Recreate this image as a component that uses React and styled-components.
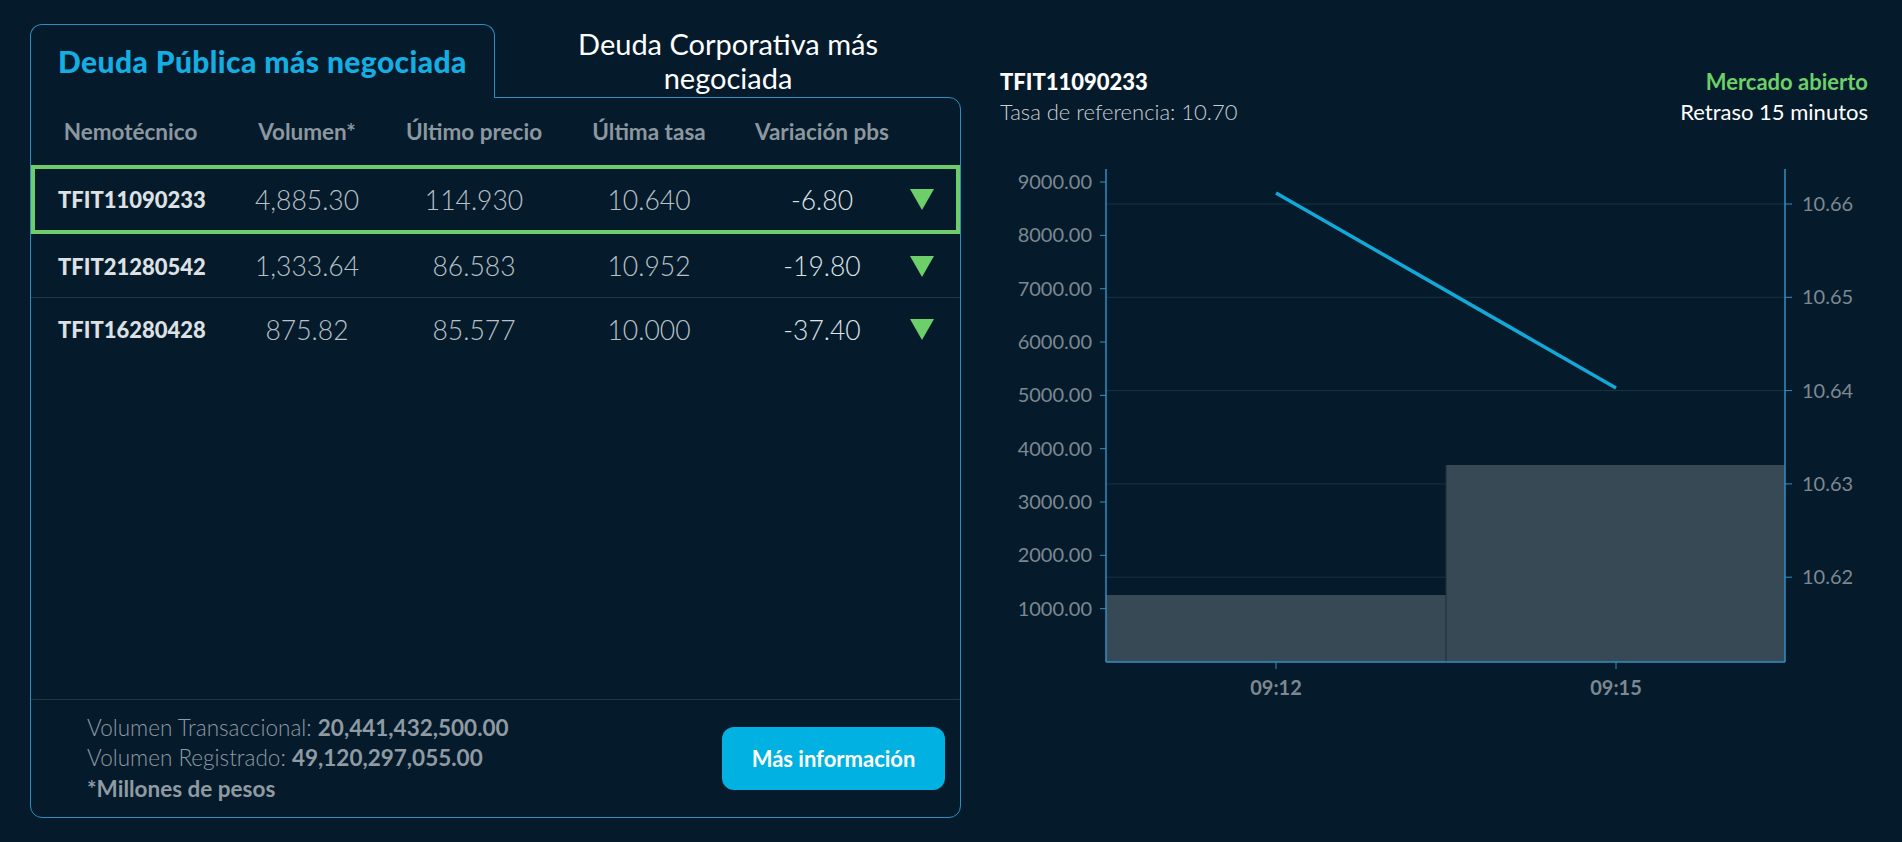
import React from 'react';
import styled, { createGlobalStyle } from 'styled-components';

const GlobalStyle = createGlobalStyle`
  body {
    margin: 0;
    background: #051b2b;
    font-family: Lato, "Open Sans", sans-serif;
  }
`

const bonds = [
  { code: 'TFIT11090233', vol: '4,885.30', price: '114.930', rate: '10.640', pbs: '-6.80', selected: true },
  { code: 'TFIT21280542', vol: '1,333.64', price: '86.583', rate: '10.952', pbs: '-19.80' },
  { code: 'TFIT16280428', vol: '875.82', price: '85.577', rate: '10.000', pbs: '-37.40' },
];

const leftTicks = [9000, 8000, 7000, 6000, 5000, 4000, 3000, 2000, 1000];
const rightTicks = [10.66, 10.65, 10.64, 10.63, 10.62];

// chart geometry (svg coords)
const X0 = 106, X1 = 785, Y0 = 512;
const volY = v => Y0 - v * 0.05333;
const rateY = r => 54 + (10.66 - r) * 9330;

const Chart = () => (
  <svg width="868" height="560" style={{ display: 'block' }}>
    {rightTicks.map(r => (
      <line key={r} x1={X0} x2={X1} y1={rateY(r)} y2={rateY(r)} stroke="#173447" strokeWidth="1" />
    ))}
    <rect x={X0} y={volY(1256)} width={340} height={Y0 - volY(1256)} fill="#364954" />
    <rect x={446} y={volY(3694)} width={339} height={Y0 - volY(3694)} fill="#364954" />
    <line x1={446} x2={446} y1={volY(3694)} y2={Y0} stroke="#1d2f3b" strokeWidth="1" />
    <line x1={276} y1={43} x2={616} y2={238} stroke="#12a8d8" strokeWidth="3.5" />

    <line x1={X0} x2={X0} y1={19} y2={Y0} stroke="#2f8fc4" strokeWidth="1.5" />
    <line x1={X1} x2={X1} y1={19} y2={Y0} stroke="#2f8fc4" strokeWidth="1.5" />
    <line x1={X0} x2={X1} y1={Y0} y2={Y0} stroke="#2f8fc4" strokeWidth="1.5" />

    {leftTicks.map(v => (
      <g key={v}>
        <line x1={100} x2={X0} y1={volY(v)} y2={volY(v)} stroke="#2f8fc4" />
        <text x={92} y={volY(v) + 7} textAnchor="end" fill="#7d8891" fontSize="20" fontFamily="Lato">{v.toFixed(2)}</text>
      </g>
    ))}
    {rightTicks.map(r => (
      <g key={r}>
        <line x1={X1} x2={X1 + 7} y1={rateY(r)} y2={rateY(r)} stroke="#2f8fc4" />
        <text x={802} y={rateY(r) + 7} fill="#7d8891" fontSize="20" fontFamily="Lato">{r.toFixed(2)}</text>
      </g>
    ))}
    {[[276, '09:12'], [616, '09:15']].map(([x, t]) => (
      <g key={t}>
        <line x1={x} x2={x} y1={Y0} y2={Y0 + 7} stroke="#2f8fc4" />
        <text x={x} y={545} textAnchor="middle" fill="#7d8891" fontSize="20" fontWeight="700" fontFamily="Lato">{t}</text>
      </g>
    ))}
  </svg>
)

const App = () => {
  return (
    <>
      <GlobalStyle />
      <Page>
        <LeftPanel>
          <Tabs>
            <ActiveTab>Deuda Pública más negociada</ActiveTab>
            <InactiveTab>Deuda Corporativa más<br />negociada</InactiveTab>
          </Tabs>
          <Body>
            <HeaderRow>
              <span>Nemotécnico</span>
              <span>Volumen*</span>
              <span>Último precio</span>
              <span>Última tasa</span>
              <span>Variación pbs</span>
              <span />
            </HeaderRow>
            {bonds.map(b => (
              <Row key={b.code} selected={b.selected}>
                <Code>{b.code}</Code>
                <Cell>{b.vol}</Cell>
                <Cell>{b.price}</Cell>
                <Cell>{b.rate}</Cell>
                <Cell strong>{b.pbs}</Cell>
                <ArrowCell><Down /></ArrowCell>
              </Row>
            ))}
            <Spacer />
            <Footer>
              <Totals>
                <div>Volumen Transaccional: <b>20,441,432,500.00</b></div>
                <div>Volumen Registrado: <b>49,120,297,055.00</b></div>
                <Note>*Millones de pesos</Note>
              </Totals>
              <InfoButton>Más información</InfoButton>
            </Footer>
          </Body>
        </LeftPanel>
        <RightPanel>
          <ChartHeader>
            <div>
              <Ticker>TFIT11090233</Ticker>
              <SubText>Tasa de referencia: 10.70</SubText>
            </div>
            <Status>
              <Open>Mercado abierto</Open>
              <Delay>Retraso 15 minutos</Delay>
            </Status>
          </ChartHeader>
          <ChartWrap>
            <Chart />
          </ChartWrap>
        </RightPanel>
      </Page>
    </>
  )
}
export default App;

const Page = styled.div`
  display: flex;
  gap: 39px;
  padding: 24px 0 0 30px;
  height: 842px;
  box-sizing: border-box;
  overflow: hidden;
`
const LeftPanel = styled.div`
  width: 931px;
  display: flex;
  flex-direction: column;
`
const Tabs = styled.div`
  display: flex;
  height: 73px;
`
const ActiveTab = styled.div`
  width: 465px;
  height: 74px;
  box-sizing: border-box;
  border: 1px solid #2e8dbf;
  border-bottom: none;
  border-radius: 12px 12px 0 0;
  background: #051b2b;
  position: relative;
  z-index: 1;
  margin-bottom: -1px;
  display: flex;
  align-items: center;
  padding: 0 0 2px 27px;
  color: #15aee2;
  font-size: 30px;
  font-weight: 900;
  letter-spacing: 0.4px;
  white-space: nowrap;
`
const InactiveTab = styled.div`
  flex: 1;
  text-align: center;
  color: #ffffff;
  font-size: 29px;
  line-height: 34px;
  padding-top: 3px;
`
const Body = styled.div`
  height: 721px;
  box-sizing: border-box;
  border: 1px solid #2e8dbf;
  border-radius: 0 12px 12px 12px;
  display: flex;
  flex-direction: column;
`
const Grid = styled.div`
  display: grid;
  grid-template-columns: 199px 154px 180px 170px 176px 1fr;
  align-items: center;
`
const HeaderRow = styled(Grid)`
  height: 67px;
  color: #8c979f;
  font-size: 22.5px;
  font-weight: 700;
  text-align: center;
  white-space: nowrap;
`
const Row = styled(Grid)`
  height: ${p => p.selected ? '70px' : '63px'};
  box-sizing: border-box;
  box-shadow: ${p => p.selected ? 'inset 0 0 0 4px #6fcc6b' : 'none'};
  border-bottom: 1px solid ${p => p.selected ? 'transparent' : '#1e3646'};
  &:nth-last-child(3) {
    border-bottom: none;
  }
`
const Code = styled.span`
  padding-left: 27px;
  color: #dde1e4;
  font-size: 22px;
  font-weight: 900;
`
const Cell = styled.span`
  text-align: center;
  color: ${p => p.strong ? '#dfe3e6' : '#b9c1c7'};
  font-size: 26.5px;
  font-weight: 300;
`
const ArrowCell = styled.span`
  display: flex;
`
const Down = styled.span`
  width: 0;
  height: 0;
  border-left: 12px solid transparent;
  border-right: 12px solid transparent;
  border-top: 21px solid #6ccf6a;
`
const Spacer = styled.div`
  flex: 1;
`
const Footer = styled.div`
  height: 118px;
  box-sizing: border-box;
  border-top: 1px solid #1e3646;
  display: flex;
  align-items: center;
  justify-content: space-between;
  padding: 0 15px 0 56px;
`
const Totals = styled.div`
  color: #8f9aa3;
  font-size: 22.5px;
  font-weight: 300;
  line-height: 30px;
  b {
    font-weight: 700;
  }
`
const Note = styled.div`
  font-weight: 700;
  padding-top: 1px;
`
const InfoButton = styled.button`
  width: 223px;
  height: 63px;
  border: none;
  border-radius: 12px;
  background: #00b1e2;
  color: #ffffff;
  font-family: Lato, sans-serif;
  font-size: 22px;
  font-weight: 700;
  cursor: pointer;
`
const RightPanel = styled.div`
  width: 868px;
  display: flex;
  flex-direction: column;
`
const ChartHeader = styled.div`
  display: flex;
  justify-content: space-between;
  margin-top: 43px;
  line-height: 30px;
  font-size: 22px;
`
const Ticker = styled.div`
  color: #ffffff;
  font-weight: 900;
`
const SubText = styled.div`
  color: #c9ced2;
  font-weight: 300;
`
const Status = styled.div`
  text-align: right;
`
const Open = styled.div`
  color: #6ccf6a;
  font-weight: 700;
`
const Delay = styled.div`
  color: #ffffff;
`
const ChartWrap = styled.div`
  margin-top: 23px;
`
